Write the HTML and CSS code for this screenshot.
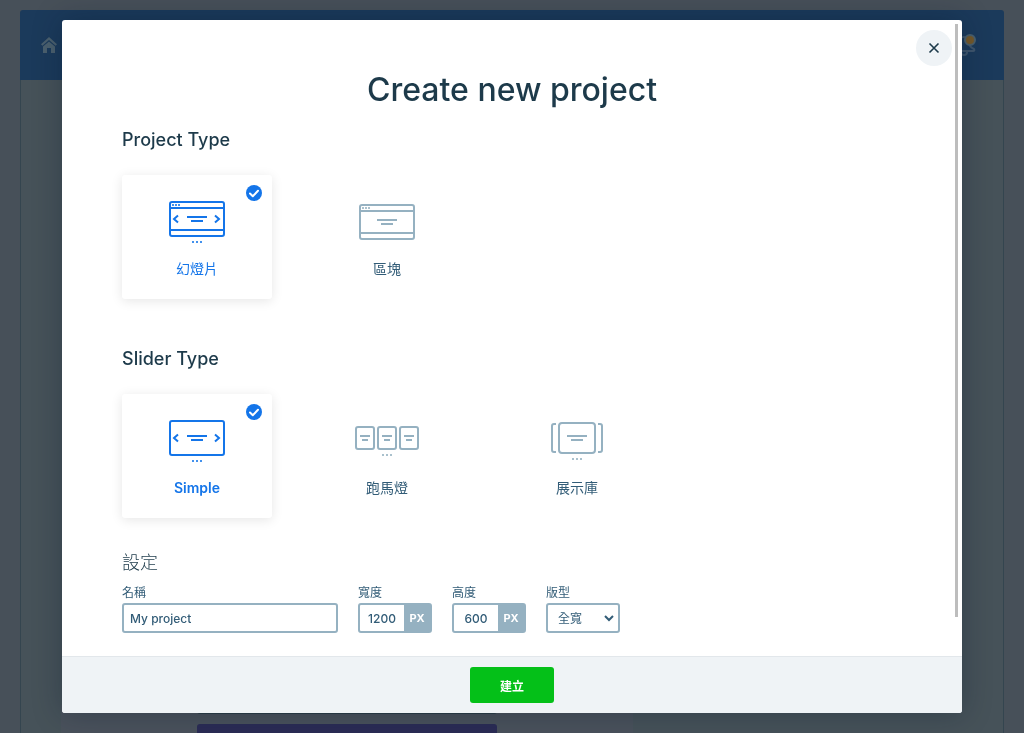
FILE: index.html
```html
<!DOCTYPE html>
<html lang="zh-Hant">
<head>
<meta charset="utf-8">
<meta name="viewport" content="width=device-width, initial-scale=1">
<title>Create new project</title>
<link rel="stylesheet" href="styles.css">
</head>
<body>
<div class="page">
  <header class="topbar">
    <svg class="home" viewBox="0 0 16 16" aria-hidden="true"><path d="M8 0 0 7.200 1.400 8.800 8 3l6.600 5.800L16 7.200zM8 4.400 2 9.600V16h4v-5h4v5h4V9.600z"/></svg>
    <svg class="bell" viewBox="0 0 24 24" aria-hidden="true"><path class="bell-line" d="M5 18q-2-1-1-2 3-2 3-7 0-5 5-5t5 5q0 5 5 7 1 2-1 2zM9 19q0 3 3 3t3-3"/><circle class="bell-dot" cx="18" cy="7" r="5"/></svg>
  </header>
  <div class="backdrop-body">
    <div class="backdrop-panel">
      <div class="backdrop-button backdrop-button-dark"></div>
      <div class="backdrop-button"></div>
    </div>
  </div>
</div>

<div class="overlay">
  <form class="modal" role="dialog" aria-labelledby="title">
    <button class="close" type="button" aria-label="Close"><svg viewBox="0 0 12 12" aria-hidden="true"><path d="M1.500 1.500l9 9m0-9l-9 9"/></svg></button>
    <div class="scroll-thumb"></div>
    <div class="content">
      <h1 class="title" id="title">Create new project</h1>

      <h2 class="section">Project Type</h2>
      <div class="cards">
        <button class="card selected" type="button" aria-pressed="true">
          <svg class="check" viewBox="0 0 16 16" aria-hidden="true"><circle cx="8" cy="8" r="8"/><path d="M4 8.500l2.800 2.700 5.200-5.400"/></svg>
          <svg class="icon" viewBox="0 0 72 48" aria-hidden="true"><rect x="9" y="4" width="54" height="34" rx="2"/><path d="M9 10h54M9 32h54M26 19h20M30 23h12M17 17.500l-4 3.500 4 3.500M54 17.500l4 3.500-4 3.500"/><path class="dots" d="M11 7h2m1 0h2m1 0h2M31 44h2m2 0h2m2 0h2"/></svg>
          <span>幻燈片</span>
        </button>
        <button class="card" type="button" aria-pressed="false">
          <svg class="icon" viewBox="0 0 72 48" aria-hidden="true"><rect x="9" y="7" width="54" height="34" rx="2"/><path d="M9 13h54M9 35h54M26 22h20M30 26h12"/><path class="dots" d="M11 10h2m1 0h2m1 0h2"/></svg>
          <span>區塊</span>
        </button>
      </div>

      <h2 class="section section-slider">Slider Type</h2>
      <div class="cards">
        <button class="card selected" type="button" aria-pressed="true">
          <svg class="check" viewBox="0 0 16 16" aria-hidden="true"><circle cx="8" cy="8" r="8"/><path d="M4 8.500l2.800 2.700 5.200-5.400"/></svg>
          <svg class="icon" viewBox="0 0 72 48" aria-hidden="true"><rect x="9" y="4" width="54" height="34" rx="2"/><path d="M26 19h20M30 23h12M17 17.500l-4 3.500 4 3.500M54 17.500l4 3.500-4 3.500"/><path class="dots" d="M31 44h2m2 0h2m2 0h2"/></svg>
          <span class="latin" lang="en">Simple</span>
        </button>
        <button class="card" type="button" aria-pressed="false">
          <svg class="icon" viewBox="0 0 72 48" aria-hidden="true"><rect x="5" y="10" width="18" height="22" rx="2"/><rect x="27" y="10" width="18" height="22" rx="2"/><rect x="49" y="10" width="18" height="22" rx="2"/><path d="M9 19h10M11 23h6M31 19h10M33 23h6M53 19h10M55 23h6"/><path class="dots" d="M31 38h2m2 0h2m2 0h2"/></svg>
          <span>跑馬燈</span>
        </button>
        <button class="card" type="button" aria-pressed="false">
          <svg class="icon" viewBox="0 0 72 48" aria-hidden="true"><rect x="18" y="6" width="36" height="30" rx="3"/><path d="M15 7h-2q-2 0-2 2v24q0 2 2 2h2M57 7h2q2 0 2 2v24q0 2-2 2h-2M26 19h20M30 23h12"/><path class="dots" d="M31 42h2m2 0h2m2 0h2"/></svg>
          <span>展示庫</span>
        </button>
      </div>

      <h2 class="section section-settings">設定</h2>
      <div class="fields">
        <div class="field field-name">
          <label for="name">名稱</label>
          <input class="box" id="name" type="text" value="My project">
        </div>
        <div class="field">
          <label for="width">寬度</label>
          <div class="box unit-box"><input id="width" type="text" value="1200"><span class="unit">PX</span></div>
        </div>
        <div class="field">
          <label for="height">高度</label>
          <div class="box unit-box"><input id="height" type="text" value="600"><span class="unit">PX</span></div>
        </div>
        <div class="field">
          <label for="layout">版型</label>
          <div class="select-wrap">
            <select class="box" id="layout"><option>全寬</option></select>
            <svg class="arrow" viewBox="0 0 10 8" aria-hidden="true"><path d="M1 2l4 4 4-4"/></svg>
          </div>
        </div>
      </div>
    </div>
    <footer class="footer"><button class="create" type="submit">建立</button></footer>
  </form>
</div>
</body>
</html>
```
FILE: styles.css
```css
* { box-sizing: border-box; }

body {
  margin: 0;
  height: 100vh;
  overflow: hidden;
  background: #475059;
  color: #1d3a4a;
  font-family: Inter, "Noto Sans CJK TC", sans-serif;
}

button, input, select { font: inherit; color: inherit; }

.page {
  display: flex;
  flex-direction: column;
  height: 100%;
  padding: 10px 20px 0;
}

.topbar {
  display: flex;
  flex: 0 0 70px;
  align-items: center;
  justify-content: space-between;
  padding: 0 28px 0 21px;
  border-radius: 3px 3px 0 0;
  background: #1b3a5b;
}

.home { width: 16px; height: 16px; fill: #4b606e; }
.bell { width: 24px; height: 24px; }
.bell-line { fill: none; stroke: #3f566d; stroke-width: 2; }
.bell-dot { fill: #75592a; stroke: #4b606e; stroke-width: 2; }

.backdrop-body {
  display: flex;
  flex: 1;
  align-items: flex-end;
  padding: 0 40px;
  border: solid #34454f;
  border-width: 0 1px;
  background: #465259;
}

.backdrop-panel {
  display: flex;
  flex-direction: column;
  align-items: center;
  gap: 10px;
  width: 572px;
  background: #4a525c;
}

.backdrop-button {
  width: 300px;
  height: 9px;
  border-radius: 3px 3px 0 0;
  background: #2b2c55;
}

.backdrop-button-dark { border-radius: 0 0 3px 3px; background: #2d3f48; }

.overlay {
  position: fixed;
  inset: 0;
  display: flex;
  justify-content: center;
  padding: 20px;
}

.modal {
  position: relative;
  display: flex;
  flex-direction: column;
  width: 100%;
  max-width: 900px;
  overflow: hidden;
  border-radius: 3px;
  background: #fff;
  box-shadow: 0 0 30px rgba(0, 20, 40, 0.3);
}

.close {
  position: absolute;
  top: 10px;
  right: 10px;
  display: grid;
  place-items: center;
  width: 36px;
  height: 36px;
  padding: 0;
  border: 0;
  border-radius: 50%;
  background: #eff3f6;
}

.close svg { width: 12px; height: 12px; fill: none; stroke: #1d3a4a; stroke-width: 1.6; }

.scroll-thumb {
  position: absolute;
  top: 4px;
  right: 4px;
  bottom: 96px;
  width: 3px;
  background: #bdbdbd;
}

.content { flex: 1; min-height: 0; padding: 50px 60px 0; }

.title {
  margin: 0 0 19px;
  font-size: 32px;
  font-weight: 500;
  line-height: 40px;
  text-align: center;
}

.section {
  margin: 0 0 24px;
  font-size: 18px;
  font-weight: 500;
  line-height: 22px;
}

.section-slider { margin-top: 49px; }
.section-settings { margin: 34px 0 12px; font-weight: 300; }

.cards { display: flex; flex-wrap: wrap; gap: 40px; }

.card {
  position: relative;
  display: flex;
  flex-direction: column;
  align-items: center;
  gap: 13px;
  width: 150px;
  height: 124px;
  padding: 23px 0 0;
  border: 0;
  border-radius: 3px;
  background: #fff;
  color: #325c77;
  font-size: 14px;
  font-weight: 400;
  line-height: 20px;
}

.card.selected {
  color: #1475e9;
  box-shadow: 0 2px 12px rgba(0, 0, 0, 0.1);
}

.latin { font-weight: 600; }

.icon { width: 72px; height: 48px; fill: none; stroke: #95b1c1; stroke-width: 2; }
.selected .icon { stroke: #1475e9; }
.dots { opacity: 0.8; }

.check { position: absolute; top: 10px; right: 10px; width: 16px; height: 16px; fill: #1475e9; }
.check path { fill: none; stroke: #fff; stroke-width: 2; stroke-linecap: round; stroke-linejoin: round; }

.fields { display: flex; flex-wrap: wrap; gap: 20px; color: #325c77; font-size: 12px; }
.field { display: flex; flex-direction: column; gap: 3px; width: 74px; }
.field-name { width: 216px; }
.field label { line-height: 14px; }

.box {
  width: 100%;
  height: 30px;
  border: 2px solid #95b1c1;
  border-radius: 3px;
  background: #fff;
  outline: 0;
}

input.box { padding: 0 6px; font-weight: 500; }

.unit-box { display: flex; }
.unit-box input { flex: 1; min-width: 0; padding: 0; border: 0; background: none; outline: 0; font-weight: 500; text-align: center; }

.unit {
  display: grid;
  place-items: center;
  width: 26px;
  background: #95b1c1;
  color: #fff;
  font-size: 11px;
  font-weight: 700;
}

.select-wrap { position: relative; }
select.box { appearance: none; padding: 0 10px; }

.arrow {
  position: absolute;
  top: 11px;
  right: 6px;
  width: 10px;
  height: 8px;
  fill: none;
  stroke: #325c77;
  stroke-width: 2;
  pointer-events: none;
}

.footer {
  display: flex;
  flex: 0 0 57px;
  align-items: center;
  justify-content: center;
  border-top: 1px solid #e2e7eb;
  background: #eff3f6;
}

.create {
  height: 36px;
  padding: 0 30px;
  border: 0;
  border-radius: 3px;
  background: #04c018;
  color: #fff;
  font-size: 12px;
  font-weight: 700;
}
```
